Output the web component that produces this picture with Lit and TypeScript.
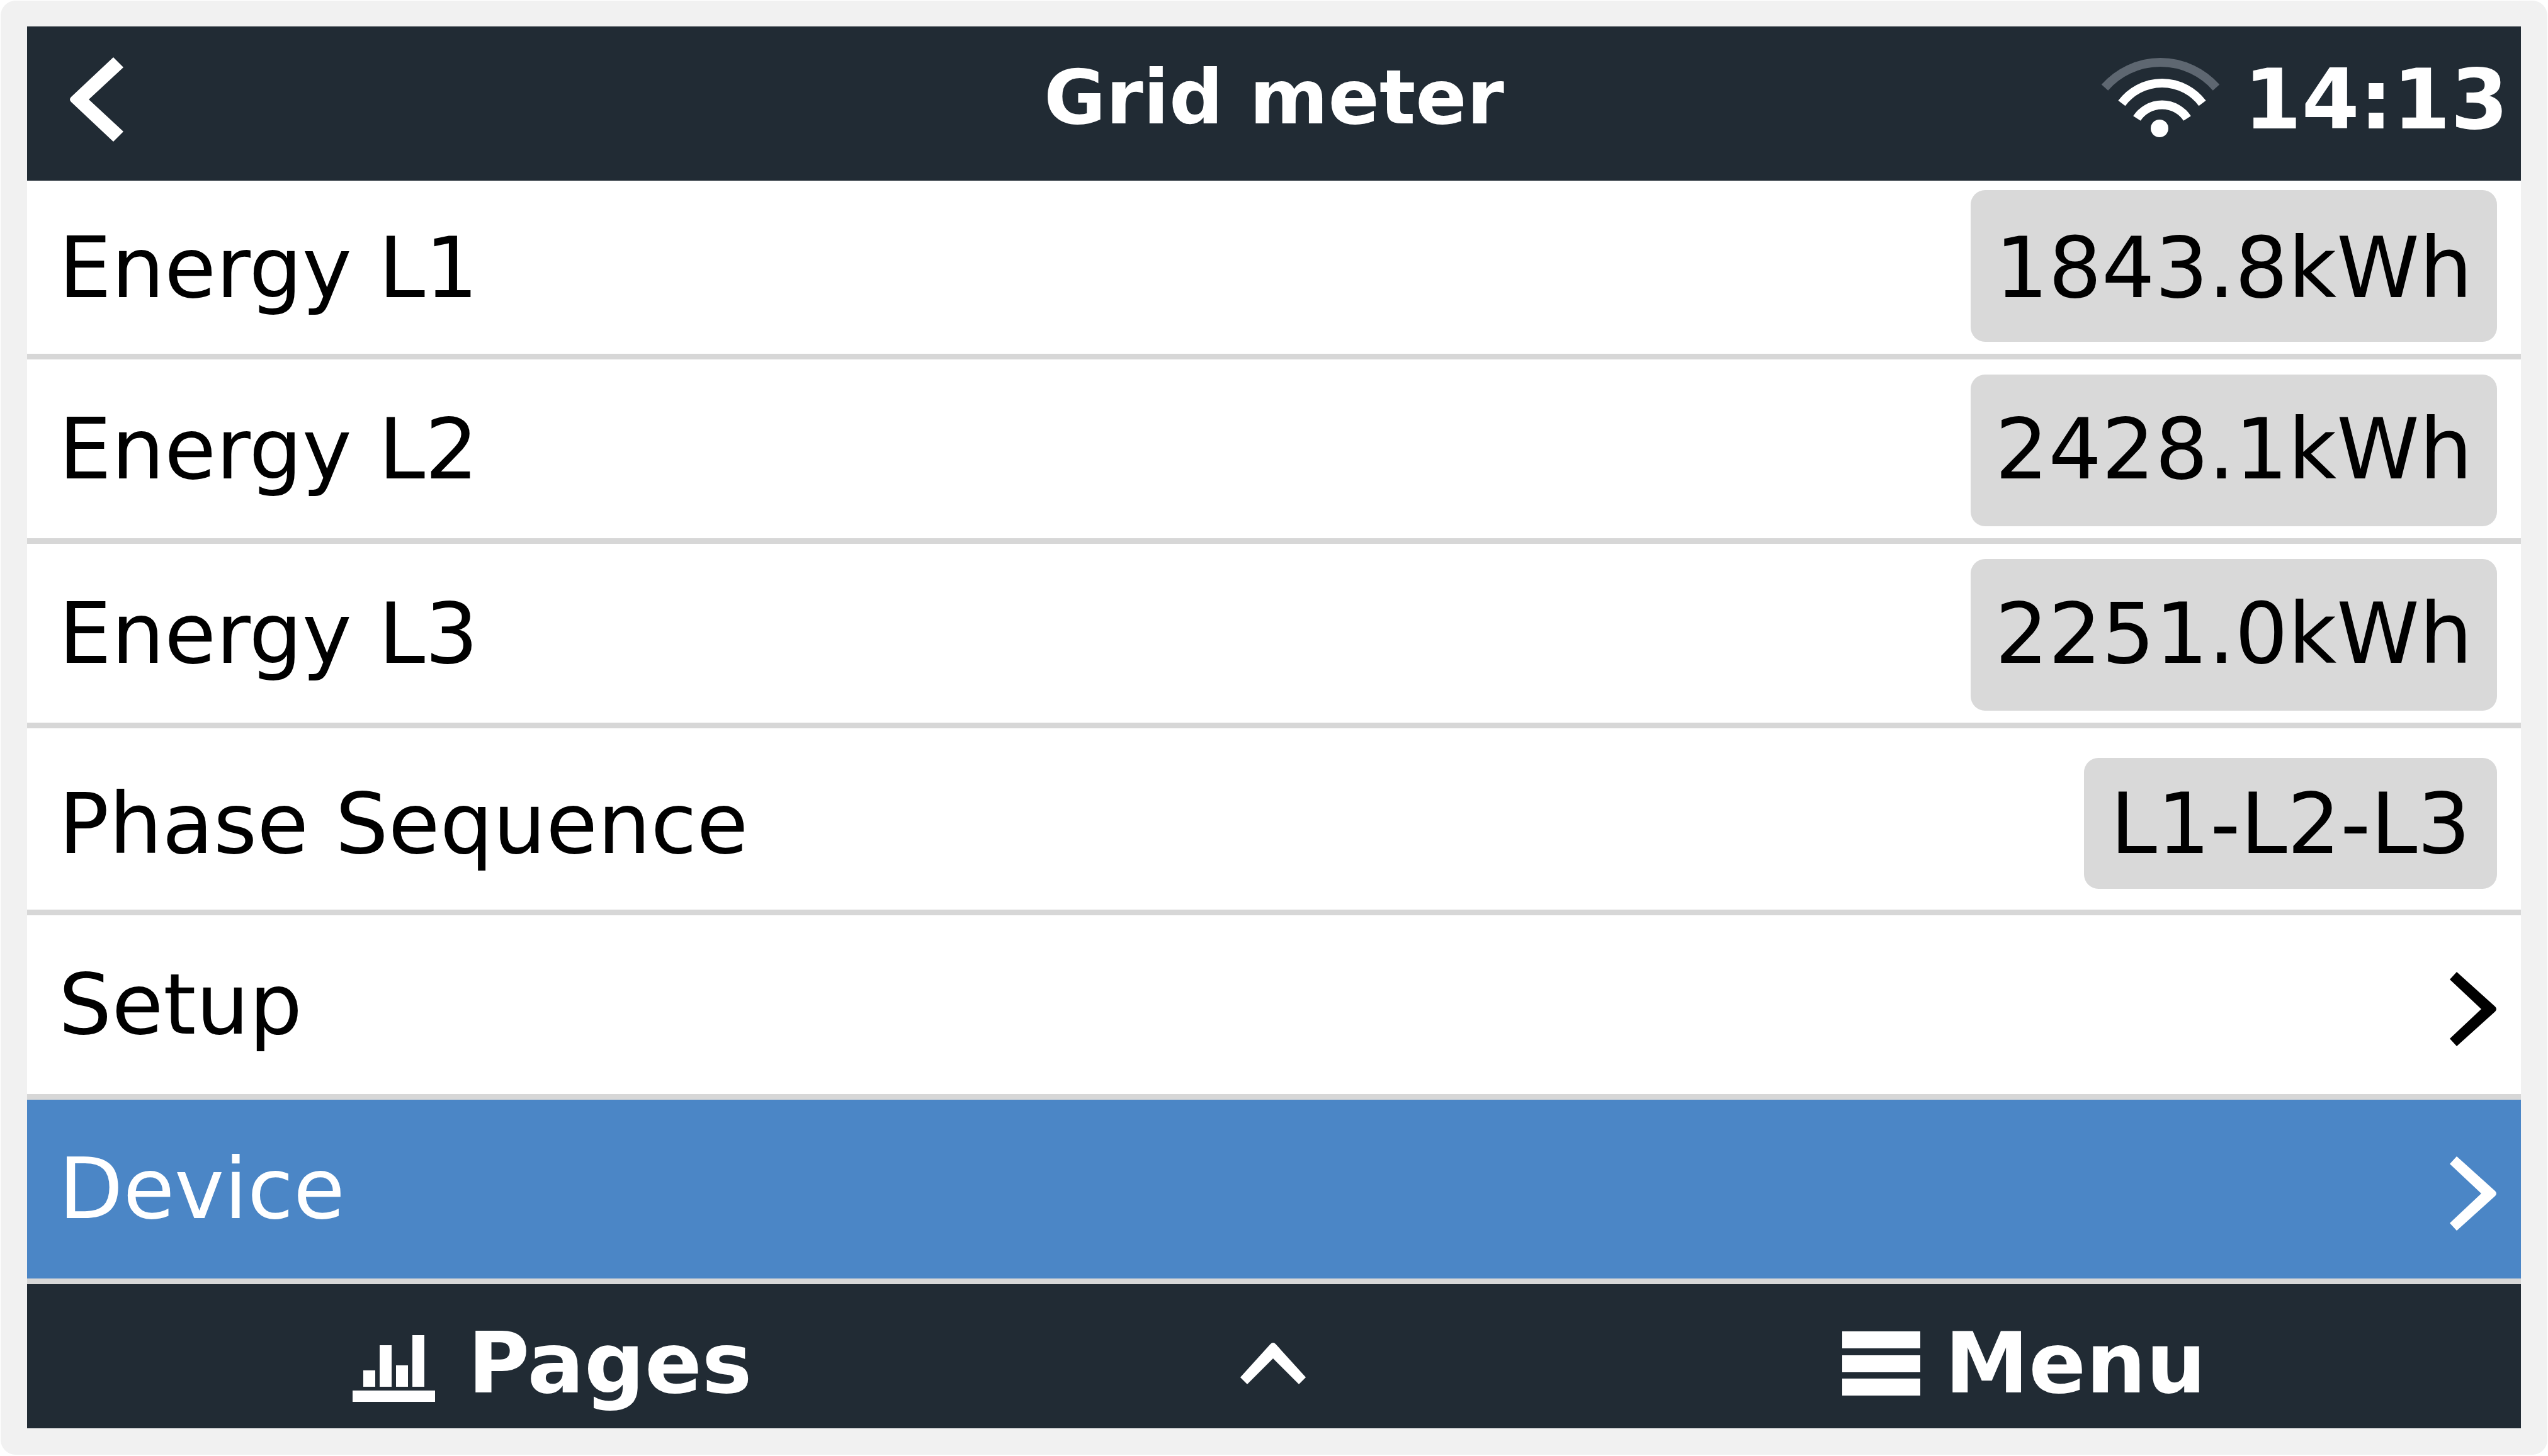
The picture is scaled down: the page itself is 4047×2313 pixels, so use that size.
import { LitElement, html, css, svg } from "lit";
import { customElement, property } from "lit/decorators.js";
import { classMap } from "lit/directives/class-map.js";

type Kind = "first" | "energy" | "text" | "link";

interface Row {
  label: string;
  kind: Kind;
  value?: string;
  selected?: boolean;
}

const ROWS: Row[] = [
  { label: "Energy L1", kind: "first", value: "1843.8kWh" },
  { label: "Energy L2", kind: "energy", value: "2428.1kWh" },
  { label: "Energy L3", kind: "energy", value: "2251.0kWh" },
  { label: "Phase Sequence", kind: "text", value: "L1-L2-L3" },
  { label: "Setup", kind: "link" },
  { label: "Device", kind: "link", selected: true },
];

@customElement("status-bar")
class StatusBar extends LitElement {
  @property() heading = "";
  @property() time = "";

  static styles = css`
    :host {
      display: grid;
      grid-template-columns: 1fr auto 1fr;
      align-items: center;
      box-sizing: border-box;
      min-height: 245px;
      padding: 0 20px 14px;
      background: #212b34;
      color: #fff;
      font-weight: bold;
    }
    .back {
      justify-self: start;
      display: flex;
      padding: 0 0 0 47px;
      border: 0;
      background: none;
      color: inherit;
    }
    .heading {
      margin: 0;
      padding-bottom: 6px;
      font-size: 120px;
      line-height: 144px;
    }
    .status {
      justify-self: end;
      display: flex;
      align-items: center;
      gap: 30px;
      font-size: 132px;
      line-height: 160px;
    }
    svg {
      display: block;
      fill: currentColor;
    }
    .back svg {
      width: 88px;
      height: 140px;
    }
    .wifi {
      width: 204px;
      height: 160px;
    }
    .arc {
      fill: none;
      stroke: currentColor;
      stroke-width: 14;
    }
    .weak {
      stroke: #5e6771;
    }
  `;

  render() {
    return html`
      <button class="back" aria-label="Back">
        <svg viewBox="0 0 88 140" aria-hidden="true">
          <path d="M70 3 86 19 31 70 86 121 70 137 3 74Q-1 70 3 66Z" />
        </svg>
      </button>
      <h1 class="heading">${this.heading}</h1>
      <div class="status">
        <svg class="wifi" viewBox="20 6 204 160" role="img" aria-label="Wi-Fi">
          ${svg`
            <path class="arc weak" d="M33 67A118 118 0 0 1 210 67" />
            <path class="arc" d="M60 92A80 80 0 0 1 188 92" />
            <path class="arc" d="M84 116A48 48 0 0 1 164 116" />
            <circle cx="120" cy="132" r="14" />
          `}
        </svg>
        <time>${this.time}</time>
      </div>
    `;
  }
}

@customElement("menu-list")
class MenuList extends LitElement {
  static styles = css`
    :host {
      display: block;
      background: #fff;
      color: #000;
      font-size: 133px;
      line-height: 160px;
    }
    .rows {
      list-style: none;
      margin: 0;
      padding: 0;
    }
    .item {
      border-bottom: 9px solid #d7d7d7;
    }
    .row {
      display: flex;
      justify-content: space-between;
      align-items: baseline;
      padding: 24px 38px 19px 50px;
      color: inherit;
      text-decoration: none;
    }
    .value {
      padding: 39px 39px 42px;
      border-radius: 23px;
      background: #d9d9d9;
    }
    .first {
      padding-top: 15px;
    }
    .first .value {
      padding-top: 44px;
      padding-bottom: 37px;
    }
    .text {
      padding-top: 47px;
      padding-bottom: 33px;
    }
    .text .value {
      padding: 25px 42px 23px;
    }
    .link {
      align-items: center;
      padding-top: 62px;
      padding-bottom: 62px;
    }
    .selected {
      background: #4b86c6;
      color: #fff;
    }
    .chevron {
      display: block;
      width: 76px;
      height: 136px;
      fill: currentColor;
    }
  `;

  private row(row: Row) {
    const classes = classMap({
      row: true,
      [row.kind]: true,
      selected: !!row.selected,
    });
    if (row.kind === "link") {
      return html`
        <a class=${classes} href="#${row.label.toLowerCase()}">
          <span>${row.label}</span>
          <svg class="chevron" viewBox="0 0 76 136" aria-hidden="true">
            <path d="M12 16 1 28 51 75 1 122 12 134 73 79Q77 75 73 71Z" />
          </svg>
        </a>
      `;
    }
    return html`
      <div class=${classes}>
        <span>${row.label}</span>
        <span class="value">${row.value}</span>
      </div>
    `;
  }

  render() {
    return html`
      <ul class="rows">
        ${ROWS.map((row) => html`<li class="item">${this.row(row)}</li>`)}
      </ul>
    `;
  }
}

@customElement("tool-bar")
class ToolBar extends LitElement {
  static styles = css`
    :host {
      display: grid;
      grid-template-columns: 1fr auto 1fr;
      align-items: center;
      box-sizing: border-box;
      min-height: 229px;
      padding: 22px 500px 0 496px;
      background: #212b34;
      color: #fff;
    }
    .tool {
      display: flex;
      align-items: center;
      padding: 0;
      border: 0;
      background: none;
      color: inherit;
      font: inherit;
      font-weight: bold;
      font-size: 134px;
      line-height: 160px;
    }
    .pages {
      justify-self: start;
      gap: 51px;
      padding-left: 20px;
    }
    .menu {
      justify-self: end;
      gap: 39px;
    }
    svg {
      display: block;
      fill: currentColor;
    }
    .bars {
      width: 133px;
      height: 122px;
    }
    .up {
      width: 106px;
      height: 68px;
    }
    .lines {
      width: 124px;
      height: 102px;
    }
  `;

  render() {
    return html`
      <button class="tool pages">
        <svg class="bars" viewBox="0 0 133 122" aria-hidden="true">
          <path
            d="M1 104H132V122H1ZM18 72H37V98H18ZM44 32H63V98H44ZM70 64H89V98H70ZM96 16H115V98H96Z"
          />
        </svg>
        Pages
      </button>
      <button class="tool" aria-label="Scroll up">
        <svg class="up" viewBox="0 0 106 68" aria-hidden="true">
          <path d="M49 3Q53 -1 57 3L105 56 94 67 53 26 12 67 1 56Z" />
        </svg>
      </button>
      <button class="tool menu">
        <svg class="lines" viewBox="0 0 124 102" aria-hidden="true">
          <path d="M0 0H124V27H0ZM0 38H124V65H0ZM0 75H124V102H0Z" />
        </svg>
        Menu
      </button>
    `;
  }
}

@customElement("app-root")
class AppRoot extends LitElement {
  static styles = css`
    :host {
      display: block;
      padding: 1px 1px 2px;
      background: #fff;
      font-family: "DejaVu Sans", Verdana, sans-serif;
    }
    .frame {
      padding: 41px 42px 42px;
      border-radius: 24px;
      background: #f1f1f1;
    }
  `;

  render() {
    return html`
      <main class="frame">
        <status-bar heading="Grid meter" time="14:13"></status-bar>
        <menu-list></menu-list>
        <tool-bar></tool-bar>
      </main>
    `;
  }
}
